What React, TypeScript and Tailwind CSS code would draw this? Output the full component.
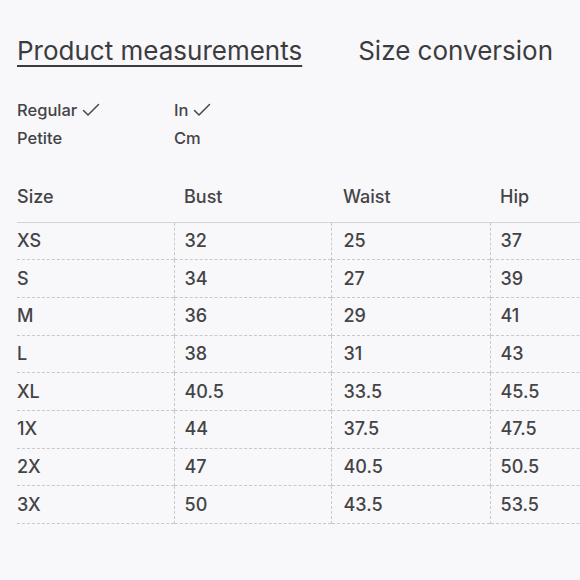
const rows = [
  ["XS", "32", "25", "37"],
  ["S", "34", "27", "39"],
  ["M", "36", "29", "41"],
  ["L", "38", "31", "43"],
  ["XL", "40.5", "33.5", "45.5"],
  ["1X", "44", "37.5", "47.5"],
  ["2X", "47", "40.5", "50.5"],
  ["3X", "50", "43.5", "53.5"],
]

const pad = ["pl-0", "pl-[10px]", "pl-[12px]", "pl-[10px]"]

function Tick() {
  return (
    <svg width="18" height="14" viewBox="0 0 18 14" fill="none" className="ml-[5px] inline-block">
      <path d="M1.5 7.5 L6 12 L16.5 1.5" stroke="#48484c" strokeWidth="1.5" strokeLinecap="round" strokeLinejoin="round" />
    </svg>
  )
}

export default function App() {
  return (
    <div
      className="h-[580px] w-[580px] overflow-hidden bg-[#f8f7fa] pl-[17px] pt-[34px] text-[#444447]"
      style={{ fontFamily: "Inter, 'Noto Sans', sans-serif" }}
    >
      {/* tabs */}
      <div className="flex items-end gap-[56px] text-[26px] leading-[34px] text-[#3c3c3f]">
        <span className="underline decoration-[1.5px] underline-offset-[5px]">Product measurements</span>
        <span>Size conversion</span>
      </div>

      {/* options */}
      <div className="mt-[28px] grid w-[320px] grid-cols-[157px_1fr] text-[16.5px] font-medium leading-[28px]">
        <div className="flex items-center">
          Regular <Tick />
        </div>
        <div className="flex items-center">
          In <Tick />
        </div>
        <div>Petite</div>
        <div>Cm</div>
      </div>

      {/* table */}
      <table className="mt-[26px] w-[628px] table-fixed border-collapse text-[18px] font-medium">
        <colgroup>
          <col className="w-[157px]" />
          <col className="w-[157px]" />
          <col className="w-[159px]" />
          <col className="w-[155px]" />
        </colgroup>
        <thead>
          <tr className="border-b-[1.5px] border-solid border-[#d3d2d7]">
            {["Size", "Bust", "Waist", "Hip"].map((h, i) => (
              <th
                key={h}
                className={`h-[44px] pb-[14px] text-left align-bottom font-medium leading-[22px] ${pad[i]}`}
              >
                {h}
              </th>
            ))}
          </tr>
        </thead>
        <tbody>
          {rows.map((r) => (
            <tr key={r[0]} className="h-[37.7px] border-b border-dashed border-[#c9c8ce]">
              {r.map((c, i) => (
                <td
                  key={i}
                  className={`align-middle leading-[22px] ${pad[i]} ${
                    i === 0 ? "" : "border-l border-dashed border-[#c9c8ce]"
                  }`}
                >
                  {c}
                </td>
              ))}
            </tr>
          ))}
        </tbody>
      </table>
    </div>
  )
}
